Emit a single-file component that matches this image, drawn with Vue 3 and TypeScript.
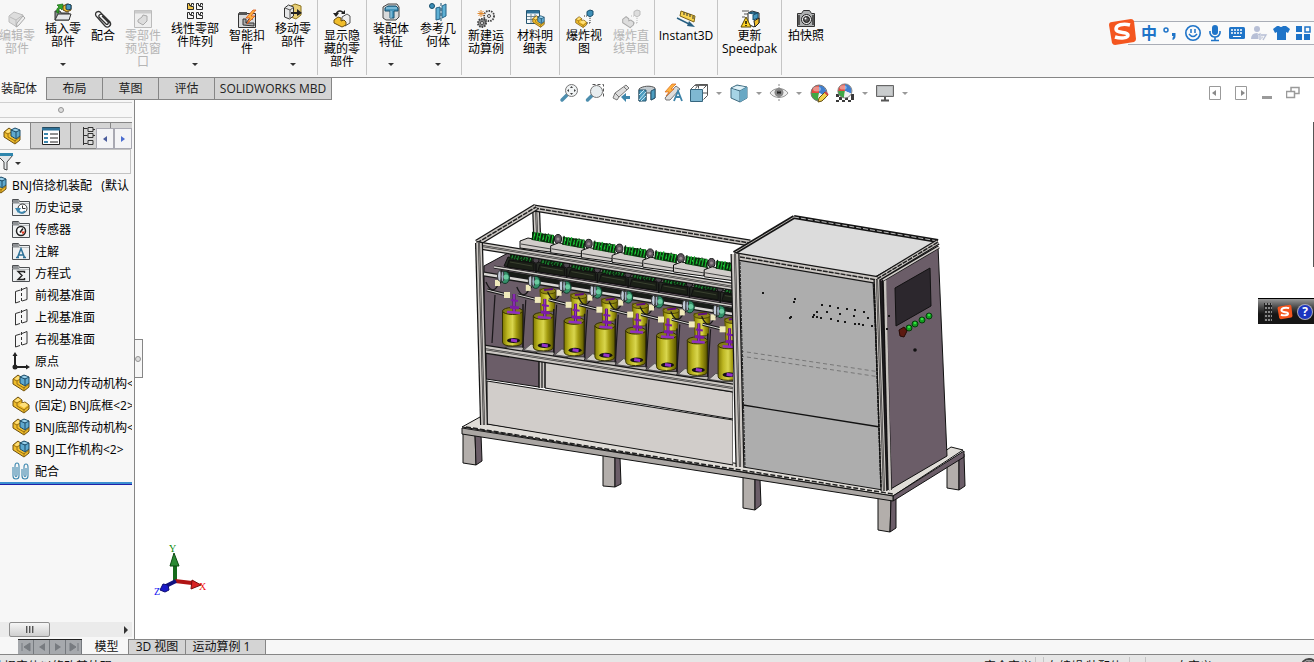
<script setup lang="ts">
interface Tool { label: string[]; icon: string; width: string; menu?: boolean; disabled?: boolean }

const part = '<path d="M1 5l5-4 4 3v3l3-1 4 3v4l-5 4L1 10z" fill="#f0bd2b" stroke="#6b4e10"/><path d="M1 5l4 2 5-3M5 7v3l7 4 5-4M12 13v4" fill="none" stroke="#9c7212"/><path d="M2.500 5L6 2l3 2-4 2zM7 9l3-2 3-.500 3 2.500-4 3z" fill="#ffe07a"/>'
const cube = '<path d="M8 3l4-2 5 2v6l-4 3-5-3z" fill="#5fa9cf" stroke="#1d4a66"/><path d="M8 3l5 2 4-2M13 5v6" fill="none" stroke="#1d4a66"/><path d="M9.500 3l2.500-1 4 1-3 1z" fill="#a9d8ee"/>'
const asm = part + cube
const folder = '<path d="M.5 4.500v-3h6l1 2h10v14H.5z" fill="#eef0f1" stroke="#4c4f52"/><path d="M1 2h5l1.500 3H1z" fill="#8f9295"/><path d="M1 5.500h16" stroke="#b9bcbe"/>'
const plane = '<path d="M3.500 5.500l5-1.500M10 3.500l5-2v12l-5 1.500M8 15.500l-4.500 1.500V5.500" fill="none" stroke="#333"/><path d="M9.500 2v14" stroke="#333" stroke-dasharray="3 2"/>'
const gear = (x: number, y: number, r: number, f: string) => `<circle cx="${x}" cy="${y}" r="${r}" fill="${f}" stroke="#444" stroke-width="2" stroke-dasharray="1.500 1"/><circle cx="${x}" cy="${y}" r="${r - 1}" fill="${f}"/><circle cx="${x}" cy="${y}" r="1.500" fill="#fff" stroke="#444"/>`
const ball = '<path d="M9 9V1a8 8 0 0 1 7 11z" fill="#3f7fd0"/><path d="M9 9V1a8 8 0 0 0-8 8z" fill="#e04a3f"/><path d="M9 9H1a8 8 0 0 0 7 8z" fill="#3fa845"/><path d="M9 9l-1 8a8 8 0 0 0 8-5z" fill="#f1f1f1"/><circle cx="9" cy="9" r="8" fill="none" stroke="#777"/><ellipse cx="7" cy="5" rx="4" ry="2.500" fill="#fff" opacity=".4"/>'
const quad = 'M.5.5h2v2h2v-2h2v2M.5.5v6h6v-3h-3'

const icons: Record<string, string> = {
  part, asm,
  edit: '<path d="M1 6l5-4 9 3v4l-6 8-8-5z" fill="#ddd" stroke="#bbb"/><path d="M2 7l6 3 7-5M8 10v5" fill="none" stroke="#bbb"/><path d="M8 17l1-4 6-7 2 2-6 7z" fill="#eee" stroke="#aaa"/>',
  insert: '<path d="M1 8h5l1 2h8v7H1z" fill="#8b8e90" stroke="#333"/><path d="M4 11h13l-2 6H1z" fill="#e6e7e8" stroke="#333"/><path d="M9 3l4-2 4 1v5l-4 2-4-2z" fill="#efbb2c" stroke="#5d4210"/><path d="M12 2l2-1 3 1v4l-3 1-2-1z" fill="#4796c2" stroke="#17405c"/><path d="M3 10c-1-3 0-5 2-6L3 2l6-1-1 6-2-2C5 6 4 8 5 10z" fill="#35a62b" stroke="#12660f" stroke-width=".7"/>',
  clip: '<path d="M16 13L7 3C5 0 0 2 2 6l9 10c3 3 7-1 5-4L9 5C7 3 4 5 5 7l7 7c1 1 3 0 2-2L8 6" fill="none" stroke="#333" stroke-width="1.300"/>',
  preview: '<path d="M.5.500h17v17H.5z" fill="#eee" stroke="#bbb"/><path d="M1 2h16" stroke="#ccc" stroke-width="3"/><path d="M4 10l4-3 1-2 4 1v5l-4 4-5-3z" fill="#ddd" stroke="#aaa"/>',
  pattern: ['#f3c84a|1|0', '#f4f4f4|10|0', '#f4f4f4|1|9', '#f4f4f4|10|9'].map((s) => { const [f, x, y] = s.split('|'); return `<g transform="translate(${x} ${y})"><path d="M.5.5h3v3h3v3h-6z" fill="${f}"/><path d="${quad}" fill="none" stroke="#2a2a2a"/></g>` }).join(''),
  smart: '<path d="M.5 3.500h17v14H.5z" fill="#d9dadb" stroke="#333"/><path d="M1 2h8v3H1z" fill="#555"/><path d="M5 15V9h3v4h8v3zM8 13l3-4h4" fill="#aaa" stroke="#333"/><path d="M15 0L8 8h4l-3 6 8-8h-4l5-6z" fill="#ffb33e" stroke="#d9541a" stroke-width=".8"/>',
  move: '<path d="M7 3l4-2 6 2v9l-5 4-5-2z" fill="#e9cf75" stroke="#8b731f"/><path d="M0.500 5l4-3 5 2v9l-4 3-5-2z" fill="#e6e7e8" stroke="#333"/><path d="M1 5l5 2 4-3M6 7v8" fill="none" stroke="#555"/><path d="M7 9h6V6l5 4-5 3v-2H7z" fill="#222"/>',
  show: '<path d="M9 7l5-3 3 2v7l-5 3-3-3z" fill="#eee" stroke="#555"/><path d="M1 10l4-3 3 1v3l3-1 2 2v3l-4 2-8-4z" fill="#f0bd2b" stroke="#6b4e10"/><path d="M3 5C4 0 9 0 10 3" fill="none" stroke="#222" stroke-width="1.600"/><path d="M0 3l3 4 3-4zM8 4l4 0V0z" fill="#222"/>',
  feature: '<path d="M1 4l5-3h9l2 3v10l-3 3H4l-3-2z" fill="#d8dadb" stroke="#444"/><path d="M3 5l3-2h8l2 2v3h-4v7H8V8H3z" fill="#4797bd" stroke="#174e6c"/><path d="M4 5h11M9 8v7" stroke="#a9d8ee"/>',
  ref: '<circle cx="3" cy="3" r="2.500" fill="#3e8fb8" stroke="#174e6c"/><path d="M7 5l4-1v12l-4 1zM13 3l4-2v12l-4 2z" fill="#5fb0d4" stroke="#246387"/><path d="M12 0v18" stroke="#174e6c" stroke-dasharray="3 2"/>',
  motion: gear(12, 6, 5, '#eee') + gear(5, 13, 4, '#888') + '<path d="M4 0v7M0.500 3.500h7M1.500 1l5 5M6.500 1l-5 5" stroke="#e08a32"/>',
  bom: '<path d="M.5.500h13v13H.5z" fill="#f3f7f9" stroke="#24546f"/><path d="M1 2h12" stroke="#2f7299" stroke-width="3"/><path d="M1 6.500h12M1 9.500h12M5 4v9M9 4v9" stroke="#6c8795"/><g transform="translate(6 5) scale(.72)">' + asm + '</g>',
  explode: '<g transform="translate(0 6) scale(.68)">' + part + '</g><path d="M12 1.500l3-1.500 3 1v4l-3 2-3-2z" fill="#3e8fb8" stroke="#174e6c"/><path d="M15 8v5M9 6h3M12 13h3" stroke="#333" stroke-dasharray="1 1"/>',
  explodeOff: '<g transform="translate(0 6) scale(.68)"><path d="M1 5l5-4 4 3v3l3-1 4 3v4l-5 4L1 10z" fill="#ddd" stroke="#aaa" stroke-width="1.500"/></g><path d="M12 1.500l3-1.500 3 1v4l-3 2-3-2z" fill="#ddd" stroke="#bbb"/><path d="M15 8v5M9 6h3M12 13h3" stroke="#bbb" stroke-dasharray="1 1"/>',
  instant: '<path d="M4 1l14 5-1 6L3 6z" fill="#f8d34e" stroke="#7c6415"/><path d="M7 2v3M10 3v3M13 4v3M16 6v3" stroke="#333"/><path d="M0 8l12 6" stroke="#265f82" stroke-width="1.500"/><path d="M12 11l6 6-8-1z" fill="#265f82"/>',
  speedpak: '<path d="M7 3l4-2 7 2v10l-5 4-6-3z" fill="#fff" stroke="#222"/><path d="M12 5l5-2v5l-5 2zM8 3l4-1 4 1-4 1z" fill="#4797bd" stroke="#174e6c"/><path d="M13 11l5-3v5l-4 4z" fill="#f0bd2b" stroke="#222"/><path d="M1 1h7M3 4h4M1 7h3" stroke="#555"/><path d="M5 7l5 10H0z" fill="#ffd426" stroke="#5d4a00"/><path d="M5 11v3M5 15v1" stroke="#000" stroke-width="1.400"/>',
  camera: '<path d="M.5 3.500h4l2-3h6l2 3h3v13H.5z" fill="#aeb0b1" stroke="#333"/><path d="M2 5v10M16 5v10" stroke="#555" stroke-width="2"/><circle cx="9.500" cy="9.500" r="5" fill="#eee" stroke="#222"/><circle cx="9.500" cy="9.500" r="3" fill="#555" stroke="#111"/><circle cx="8.500" cy="8.500" r="1" fill="#fff"/>',
  zoomFit: '<path d="M2 16l5-5" stroke="#4d8eae" stroke-width="3.500" stroke-linecap="round"/><circle cx="11.500" cy="6.500" r="6" fill="#f0f3f4" stroke="#777"/><path d="M11.500 2l1.500 2h-3zM11.500 11l1.500-2h-3zM7 6.500L9 5v3zM16 6.500L14 5v3z" fill="#444"/>',
  zoomArea: '<path d="M6.500.500h11v12" fill="none" stroke="#555" stroke-dasharray="3 2"/><path d="M1.500 16l5-5" stroke="#4d8eae" stroke-width="3.500" stroke-linecap="round"/><circle cx="10.500" cy="7.500" r="6" fill="#e8edef" stroke="#777"/>',
  prev: '<path d="M1 14l2-5 11-8 3 3-10 9-2 3z" fill="#ddd" stroke="#777"/><path d="M3 9l4 4M12 3l3 3" stroke="#777"/><path d="M9 13l5-4v3h4v3h-4v3z" fill="#3e86ab"/>',
  section: '<path d="M1 5c3-3 12-4 16-1v10l-4 2V9H8v7l-7 1z" fill="#c3cbd0" stroke="#555"/><path d="M1 6h7v11H1zM13 7l4-2v9l-4 2z" fill="#4d9dc0" stroke="#24546f"/><path d="M1 11l5-5M1 16l7-8M3 17l5-5" stroke="#c2e3f0"/>',
  annot: '<path d="M1 14L12 2l4 3L6 16H2z" fill="#ddd" stroke="#777"/><path d="M8 0L1 8h4l-3 4 8-7H7l5-5z" fill="#ffb33e" stroke="#d9651a" stroke-width=".7"/><path d="M10 17l4-10 4 10M11 13h5" fill="none" stroke="#3d83a8" stroke-width="1.800"/>',
  orient: '<path d="M5.500 4.500l3-4h9v11l-4 4M13.500 4.500l4-4M8.500 4.500v-4M13 9h5" fill="none" stroke="#555"/><path d="M.5 5.500h12v12H.5z" fill="#7fb8d2" stroke="#36667f"/><path d="M.5 5.500l5-5h4M4.500 1.500h12" fill="none" stroke="#666"/>',
  display: '<path d="M1 4l6-3 10 2v11l-7 4-9-4z" fill="#a6d3e5" stroke="#406b80"/><path d="M1 4l9 3 7-4M10 7v11" fill="none" stroke="#406b80"/><path d="M10 7l7-4v11l-7 4z" fill="#69a8c4"/><path d="M2 4l5-2 8 1-5 3z" fill="#e0f1f7"/>',
  eye: '<path d="M0 9c4-6 14-6 18 0-4 6-14 6-18 0z" fill="#eee" stroke="#999"/><circle cx="9" cy="8.500" r="4.500" fill="#888"/><circle cx="9" cy="8.500" r="2" fill="#222"/><path d="M9 0v18" stroke="#888" stroke-dasharray="2 1"/>',
  appearance: ball + '<path d="M8 18l1-4 6-6 3 3-6 6z" fill="#f2d34d" stroke="#665114"/><path d="M15 8l3 3" stroke="#c44" stroke-width="2"/>',
  scene: '<path d="M0 9h18v9H0z" fill="#fff"/><path d="M0 10h3v3H0zM3 13h3v3H3zM0 16h3v2H0zM6 16h3v2H6zM9 13h3v3H9zM15 10h3v3h-3zM12 16h3v2h-3zM15 13h3v3h-3z" fill="#3a3a3a"/><g transform="translate(1 -1) scale(.88)">' + ball + '</g>',
  monitor: '<path d="M.5 1.500h17v11H.5z" fill="#b8babc" stroke="#666"/><path d="M2 3h14v8H2z" fill="#c9cccd"/><path d="M9 13v3M5 16.500h8" stroke="#555" stroke-width="2"/>',
  history: folder + '<circle cx="10.500" cy="10.500" r="4.500" fill="#fff" stroke="#333"/><path d="M10.500 7.500v3h3" fill="none" stroke="#333"/><path d="M3 10l3 5 3-5z" fill="#3d87ae"/><path d="M6 12c1 3 5 4 7 1" fill="none" stroke="#3d87ae" stroke-width="2"/>',
  sensor: folder + '<circle cx="9" cy="11" r="4.500" fill="#fff" stroke="#222" stroke-width="1.500"/><path d="M8 12.500l3-4" stroke="#222" stroke-width="1.500"/><path d="M9 11.500h4l-2 3z" fill="#e33b22"/>',
  note: folder + '<path d="M5.500 15.500l3.500-9 3.500 9M7 13h4M4 15.500h3M11 15.500h3" fill="none" stroke="#2d7198" stroke-width="1.500"/>',
  equation: folder + '<path d="M12.500 9V7.500H6l4 4-4 4h6.500V14" fill="none" stroke="#222" stroke-width="1.400"/>',
  plane,
  origin: '<path d="M3 15V3M3 15h12" stroke="#222" stroke-width="2"/><path d="M3 0l2.500 4h-5zM18 15l-4-2.500v5z" fill="#222"/><circle cx="3" cy="15" r="2.500" fill="#222"/>',
  mates: '<path d="M1 5v9c0 4 6 4 6 0V4c0-4-4-4-4 0v9c0 2 2 2 2 0V5M10 7v7c0 4 6 4 6 0V5c0-4-4-4-4 0v8c0 2 2 2 2 0V6" fill="none" stroke="#3d87ae" stroke-width="1.100"/>',
  props: '<path d="M.5.500h17v17H.5z" fill="#fff" stroke="#222"/><path d="M0 2h18" stroke="#2f7299" stroke-width="3"/><path d="M2 6h4v2H2zM2 10h4v2H2zM2 14h4v2H2z" fill="#3d87ae"/><path d="M8 7h8M8 11h8M8 15h8" stroke="#222"/>',
  config: '<path d="M1.500 0v18M1.500 1.500h4M1.500 8.500h4M1.500 16.500h4M6 .5h5v4H6zM6 6.500h5v4H6zM6 13.500h5v4H6zM11 2.500h2M11 8.500h2" fill="#ddd" stroke="#333"/>',
}

const groups: Tool[][] = [
  [
    { label: ['编辑零', '部件'], icon: 'edit', width: 'w46', disabled: true },
    { label: ['插入零', '部件'], icon: 'insert', width: 'w46', menu: true },
    { label: ['配合'], icon: 'clip', width: 'w34' },
    { label: ['零部件', '预览窗', '口'], icon: 'preview', width: 'w46', disabled: true },
    { label: ['线性零部', '件阵列'], icon: 'pattern', width: 'w58', menu: true },
    { label: ['智能扣', '件'], icon: 'smart', width: 'w46' },
    { label: ['移动零', '部件'], icon: 'move', width: 'w46', menu: true },
  ],
  [{ label: ['显示隐', '藏的零', '部件'], icon: 'show', width: 'w48' }],
  [
    { label: ['装配体', '特征'], icon: 'feature', width: 'w48', menu: true },
    { label: ['参考几', '何体'], icon: 'ref', width: 'w46', menu: true },
  ],
  [{ label: ['新建运', '动算例'], icon: 'motion', width: 'w48' }],
  [{ label: ['材料明', '细表'], icon: 'bom', width: 'w48' }],
  [
    { label: ['爆炸视', '图'], icon: 'explode', width: 'w48' },
    { label: ['爆炸直', '线草图'], icon: 'explodeOff', width: 'w46', disabled: true },
  ],
  [{ label: ['Instant3D'], icon: 'instant', width: 'w62' }],
  [{ label: ['更新', 'Speedpak'], icon: 'speedpak', width: 'w63' }],
  [{ label: ['拍快照'], icon: 'camera', width: 'w48' }],
]

const docTabs = ['布局', '草图', '评估', 'SOLIDWORKS MBD']
const viewTools: { icon: string; menu?: boolean; name: string }[] = [
  { icon: 'zoomFit', name: '整屏显示全图' }, { icon: 'zoomArea', name: '局部放大' }, { icon: 'prev', name: '上一视图' },
  { icon: 'section', name: '剖面视图' }, { icon: 'annot', name: '动态注解视图' }, { icon: 'orient', name: '视图定向', menu: true },
  { icon: 'display', name: '显示样式', menu: true }, { icon: 'eye', name: '隐藏/显示项目', menu: true },
  { icon: 'appearance', name: '编辑外观' }, { icon: 'scene', name: '应用布景', menu: true }, { icon: 'monitor', name: '视图设定', menu: true },
]
const tree = [
  { icon: 'history', text: '历史记录' }, { icon: 'sensor', text: '传感器' }, { icon: 'note', text: '注解' },
  { icon: 'equation', text: '方程式' }, { icon: 'plane', text: '前视基准面' }, { icon: 'plane', text: '上视基准面' },
  { icon: 'plane', text: '右视基准面' }, { icon: 'origin', text: '原点' }, { icon: 'asm', text: 'BNJ动力传动机构<1>' },
  { icon: 'part', text: '(固定) BNJ底框<2>' }, { icon: 'asm', text: 'BNJ底部传动机构<1>' },
  { icon: 'asm', text: 'BNJ工作机构<2>' }, { icon: 'mates', text: '配合' },
]

/* ---- machine drawing ---- */
type P = [number, number]
const poly = (pts: P[], fill: string, stroke = '#111') => `<polygon points="${pts.map((p) => p.join(',')).join(' ')}" fill="${fill}" stroke="${stroke}" stroke-width="1"/>`
const line = (a: P, b: P, c: string, w = 1, dash = '') => `<path d="M${a}L${b}" stroke="${c}" stroke-width="${w}" fill="none"${dash ? ` stroke-dasharray="${dash}"` : ''}/>`
const beam = (a: P, b: P, w: number, face = '#cbc7c3') => line(a, b, '#161616', w) + line(a, b, face, w - 2.500) + line(a, b, '#222', 1.500, '5 1')
const twin = (a: P, b: P, w: number) => line(a, b, '#161616', w) + line(a, b, '#cbc7c3', w - 2.500) + line(a, b, '#2a2a2a', 2) + line(a, b, '#a9a5a1', .8)

function bobbin(x: number, y: number, dim: boolean): string {
  const h = dim ? 6 : 9
  let s = poly([[x, y + 1], [x + 22, y + 4], [x + 22, y + 4 + h], [x, y + h]], dim ? '#10150f' : '#0b3a10', 'none')
  for (let k = 0; k < 15; k++) {
    const px = x + k * 1.5
    const py = y + k * .25
    const j = (k * 7) % 5
    const lit = dim ? '#177a2c' : '#16b72e'
    s += line([px, py + h - j * .4], [px + 1.500, py + j * .6], k % 2 ? lit : '#0a2b0d', 1.200)
    if (k % 3 === 1) s += line([px + 1, py + 1 + j], [px + 1.500, py + 3 + j], dim ? '#2a9c43' : '#2be046', 1)
  }
  return s
}

function machine(): string {
  let s = ''
  const purple = '#6b5d68', light = '#d1cdca', front = '#b3aeab'
  const leg = (a: P, b: P, c: P, d: P, e: P, f: P) => poly([a, b, e, f], front) + poly([b, c, d, e], purple)
  s += leg([463, 432], [475, 434], [481, 434], [482, 461], [476, 465], [463, 463])
  s += leg([603, 454], [615, 456], [620, 457], [621, 484], [615, 487], [603, 486])
  s += leg([743, 476], [755, 478], [760, 479], [761, 505], [755, 510], [743, 508])
  s += leg([947, 462], [959, 455], [964, 454], [965, 486], [959, 490], [947, 488])
  s += leg([878, 498], [891, 500], [896, 497], [896, 528], [890, 532], [878, 530])
  s += poly([[462, 427], [480, 417], [488, 424], [740, 464], [892, 488], [951, 447], [963, 450], [893, 496]], '#e0ddd8')
  s += poly([[893, 496], [964, 451], [964, 457], [893, 501]], purple)
  s += poly([[462, 428], [893, 496], [893, 501], [462, 434]], '#aaa6a3')
  s += line([466, 427], [893, 494], '#222', 1.500, '5 2')

  s += twin([536, 207], [537, 233], 8)
  s += beam([534, 208], [750, 243], 7)
  s += beam([477, 243], [536, 207], 7)
  s += '<g clip-path="url(#bay)">'
  s += poly([[484, 266], [508, 253], [733, 292], [733, 388], [484, 349]], purple)
  s += poly([[487, 381], [733, 420], [733, 465], [487, 424]], light)
  s += poly([[545, 361], [733, 392], [733, 419], [545, 388]], light)
  s += poly([[486, 352], [539, 361], [539, 387], [486, 379]], purple)
  s += twin([542, 360], [542, 388], 7)
  s += poly([[508, 257], [733, 294], [733, 303], [504, 266]], '#262b24')
  for (let i = 0; i < 8; i++) {
    const x = 30.7 * i, y = 4.8 * i
    s += poly([[520 + x, 241 + y], [528 + x, 238 + y], [554 + x, 243 + y], [550 + x, 252 + y], [520 + x, 248 + y]], light)
    s += line([521 + x, 244 + y], [551 + x, 249 + y], '#444')
    s += bobbin(532 + x, 231 + y, false)
    s += `<ellipse cx="${558 + x}" cy="${239 + y}" rx="3.500" ry="4.500" fill="#625761" stroke="#181818"/><circle cx="${558 + x}" cy="${239 + y}" r="1.500" fill="#9b8d93"/>`
    s += bobbin(510 + x, 253 + y, true)
    s += poly([[509 + x, 260 + y], [534 + x, 263 + y], [534 + x, 271 + y], [507 + x, 267 + y]], '#1b2017')
    s += line([510 + x, 262 + y], [532 + x, 266 + y], '#39402f')
    s += `<circle cx="${536 + x}" cy="${260 + y}" r="3.200" fill="#4b454c" stroke="#111"/>` + line([536 + x, 264 + y], [536 + x, 275 + y], '#111', 1.500)
  }
  s += line([494, 267], [733, 306], '#1a1a1a', 3) + line([494, 267], [733, 306], '#d5d2ce', 1.500)
  s += line([500, 273], [733, 311], '#181c17', 6)
  for (let i = 0; i < 8; i++) {
    const x = 30.8 * i, y = 4.9 * i
    s += poly([[524 + x, 350 + y], [531 + x, 344 + y], [545 + x, 347 + y], [545 + x, 353 + y]], light, '#555')
    s += line([495 + x, 295 + y], [492 + x, 343 + y], '#1b181b', 1.200)
    s += line([523 + x, 304 + y], [523 + x, 349 + y], '#1b181b', 1.500)
    if (i < 7) {
      s += poly([[540 + x, 289 + y], [556 + x, 292 + y], [554 + x, 311 + y], [541 + x, 312 + y]], 'url(#can)', '#5b5600')
      s += `<ellipse cx="${548 + x}" cy="${291 + y}" rx="8" ry="3" fill="#8f8617" stroke="#4d4800"/>` + line([544 + x, 290 + y], [553 + x, 289 + y], '#62107f', 2)
    }
    s += poly([[507 + x, 347 + y], [524 + x, 347 + y], [522 + x, 352 + y], [503 + x, 349 + y]], '#bcb8b4', '#333')
    s += `<path d="M${502.500 + x} ${311 + y}v31q0 4 10 4t10-4v-31z" fill="url(#can)" stroke="#343100"/><ellipse cx="${512.500 + x}" cy="${311 + y}" rx="10" ry="3.500" fill="#827a16" stroke="#343100"/>`
    s += line([514 + x, 294 + y], [514 + x, 312 + y], '#4c0f68', 3) + line([514 + x, 294 + y], [514 + x, 312 + y], '#9b35c8', 1.500)
    s += line([511 + x, 300 + y], [518 + x, 301 + y], '#7b1ca4', 2) + line([510 + x, 307 + y], [519 + x, 308 + y], '#7b1ca4', 3) + line([507 + x, 312 + y], [520 + x, 313 + y], '#8f2fc0', 2.500)
    s += `<ellipse cx="${513.500 + x}" cy="${340.500 + y}" rx="6.500" ry="2.500" fill="#151015"/>` + line([511 + x, 340 + y], [517 + x, 341 + y], '#9332c9', 3)
  }
  s += line([484, 274], [733, 314], '#1a1a1a', 5) + line([484, 274], [733, 314], '#d9d7d4', 2.500)
  for (let i = 0; i < 8; i++) {
    const x = 30.8 * i, y = 4.9 * i
    s += line([487 + x, 290 + y], [507 + x, 295 + y], '#1a1a1a', 3) + line([487 + x, 290 + y], [507 + x, 295 + y], '#d9d7d4', 1)
    s += `<path d="M${486 + x} ${282 + y}q6 14 12 3l7-7" fill="none" stroke="#191919" stroke-width="1.300"/>`
    s += `<rect x="${495 + x}" y="${280 + y}" width="5" height="6" fill="#f0eabc"/><rect x="${504 + x}" y="${292 + y}" width="6" height="6" fill="#f0eabc"/>`
    s += `<ellipse cx="${505 + x}" cy="${277.500 + y}" rx="4.500" ry="6" fill="#35906a" stroke="#123b2a"/><ellipse cx="${499.500 + x}" cy="${276 + y}" rx="2" ry="5" fill="#c2cbd8" stroke="#333"/><ellipse cx="${502.500 + x}" cy="${276.500 + y}" rx="1.500" ry="5" fill="#9cabc0" stroke="#333"/><circle cx="${506 + x}" cy="${277 + y}" r="2.500" fill="#6bcba0"/>`
  }
  s += twin([484, 349], [733, 388], 9)
  s += '</g>'
  s += twin([476, 245], [734, 287], 8)
  s += twin([479, 243], [484, 425], 8)
  s += poly([[738, 258], [873, 281], [883, 490], [743, 467]], '#adadad')
  s += line([740, 351], [880, 372], '#777', 1, '4 3') + line([740, 356], [880, 377], '#777', 1, '4 3') + line([743, 405], [880, 427], '#111', 1.300)
  s += poly([[734, 253], [794, 217], [938, 241], [875, 277]], '#dcdcdc')
  s += line([734, 253], [794, 217], '#151515', 4) + line([734, 253], [794, 217], '#aaa7a3', 1)
  s += line([794, 217], [938, 241], '#151515', 4) + line([794, 217], [938, 241], '#bbb', 1, '5 2')
  s += poly([[880, 280], [938, 246], [947, 456], [889, 490]], purple)
  s += beam([877, 279], [938, 242], 6)
  s += beam([734, 256], [877, 280], 8)
  s += twin([735, 254], [740, 467], 9)
  s += line([740, 262], [745, 467], '#222', 1, '3 1')
  s += line([881, 281], [888, 490], '#211d22', 5)
  s += twin([877, 280], [884, 491], 7)
  s += line([884, 280], [890, 490], '#111', 4) + line([885, 280], [890, 490], '#c8c4c0', 2.500)
  s += line([874, 284], [881, 488], '#111', 1.500, '3 1')
  s += line([883, 280], [939, 247], '#111', 3) + line([883, 280], [939, 247], '#d0ccc8', 1.500)
  s += poly([[895, 288], [930, 268], [931, 306], [896, 326]], '#2c272d')
  const greens: P[] = [[929, 316], [922, 320], [915, 324], [909, 328]]
  for (const [x, y] of greens) s += `<circle cx="${x}" cy="${y}" r="3" fill="#139c20" stroke="#063b0b"/><circle cx="${x}" cy="${y - 1}" r="1.300" fill="#34e13f"/>`
  s += '<path d="M899 330l5-3 3 4-3 6-4-1z" fill="#5c1910" stroke="#260905"/><circle cx="915" cy="350" r="1.800" fill="#111"/>'
  const dots: P[] = [[763, 293], [795, 299], [794, 302], [791, 317], [790, 318], [822, 305], [830, 306], [838, 308], [847, 309], [855, 310], [864, 312], [827, 312], [840, 314], [854, 316], [868, 318], [817, 312], [814, 315], [817, 317], [813, 317], [821, 318], [831, 319], [838, 321], [845, 322], [855, 324], [859, 324], [863, 325], [872, 326], [889, 316], [887, 329]]
  for (const [x, y] of dots) s += `<rect x="${x - 1}" y="${y - 1}" width="2" height="2" fill="#161616"/>`
  return s
}
const machineMarkup = '<defs><clipPath id="bay"><path d="M480 215h253v255H480z"/></clipPath><linearGradient id="can"><stop offset="0" stop-color="#817a00"/><stop offset=".25" stop-color="#bdb723"/><stop offset=".5" stop-color="#d9d64d"/><stop offset=".7" stop-color="#a39c10"/><stop offset="1" stop-color="#5b5600"/></linearGradient></defs>' + machine()
const sogou = '<path d="M4 4L23 1q2 0 3 2l2 18q0 2-2 3L7 27q-2 0-3-2L1 7q0-3 3-3z" fill="#f4561f"/><path d="M22 7C15 5 8 7 8 11c0 5 12 2 12 6 0 3-7 4-13 2" fill="none" stroke="#fff" stroke-width="3.500"/>'
const ime = [
  { name: '标点', art: '<circle cx="4" cy="6" r="2" fill="none" stroke="#1f74c8" stroke-width="1.500"/><path d="M10 9h3.500v3q0 3-3 4v-2l1-2H10z" fill="#1f74c8"/>' },
  { name: '表情', art: '<circle cx="9" cy="9" r="7.200" fill="none" stroke="#1f74c8" stroke-width="1.600"/><path d="M7 5v4M11 5v4M5 10q4 5 8 0" fill="none" stroke="#1f74c8" stroke-width="1.500"/>' },
  { name: '语音', art: '<rect x="6" y="1" width="6" height="10" rx="3" fill="#1f74c8"/><path d="M4 7v2q1 4 5 4t5-4V7M9 13v3M5 16.500h8" fill="none" stroke="#1f74c8" stroke-width="1.600"/>' },
  { name: '键盘', art: '<rect x="1" y="3" width="16" height="12" rx="1.500" fill="#1f74c8"/><path d="M3 6h12M3 9h12" stroke="#fff" stroke-width="1.500" stroke-dasharray="2 1"/><path d="M5 12.500h8" stroke="#fff"/>' },
  { name: '用户', art: '<circle cx="7" cy="5" r="3" fill="#b7bfd6"/><path d="M1 15q0-6 6-6t6 6z" fill="#b7bfd6"/><path d="M8 11l2-1v6M11 11h5l-3 5" fill="none" stroke="#f7f7f7" stroke-width="3"/><path d="M8 11l2-1v6M11 11h5l-3 5" fill="none" stroke="#b7bfd6" stroke-width="1.300"/>' },
  { name: '皮肤', art: '<path d="M5 2h2q2 2 4 0h3l4 3-2 4-2-1v8H5V8L3 9 1 5z" fill="#1f74c8"/>' },
  { name: '工具箱', art: '<path d="M2 2h6v6H2zM2 10h6v6H2zM10 10h6v6h-6z" fill="#1f74c8"/><path d="M11 3h5v5h-5z" fill="none" stroke="#1f74c8" stroke-width="1.500"/>' },
]
</script>

<template>
  <div class="app">
    <header class="ribbon">
      <div v-for="(g, gi) in groups" :key="gi" class="group">
        <button v-for="t in g" :key="t.label.join('')" type="button" class="tool" :class="[t.width, { menu: t.menu }]" :disabled="t.disabled">
          <svg class="icon" viewBox="0 0 18 18" aria-hidden="true" v-html="icons[t.icon]" />
          <span v-for="l in t.label" :key="l" class="label">{{ l }}</span>
          <i v-if="t.menu" class="caret" />
        </button>
      </div>
      <div class="ime">
        <svg class="ime-logo" viewBox="0 0 29 28" aria-hidden="true" v-html="sogou" />
        <button type="button" class="ime-mode">中</button>
        <button v-for="b in ime" :key="b.name" type="button" class="ime-btn" :aria-label="b.name">
          <svg class="icon" viewBox="0 0 18 18" aria-hidden="true" v-html="b.art" />
        </button>
      </div>
    </header>

    <div class="tabrow">
      <nav class="tabs" aria-label="命令管理器">
        <button type="button" class="tab active">装配体</button>
        <button v-for="t in docTabs" :key="t" type="button" class="tab">{{ t }}</button>
      </nav>
      <div class="viewbar">
        <template v-for="v in viewTools" :key="v.icon">
          <button type="button" class="vbtn" :aria-label="v.name"><svg class="icon" viewBox="0 0 18 18" aria-hidden="true" v-html="icons[v.icon]" /></button>
          <button v-if="v.menu" type="button" class="vmenu" :aria-label="v.name + '菜单'"><i class="caret grey" /></button>
        </template>
      </div>
      <div class="winbtns">
        <button type="button" aria-label="左侧面板"><svg viewBox="0 0 14 14"><path d="M1.500.5h11v13h-11z" fill="none" stroke="#9a9a9a" /><path d="M8 4v6L4 7z" fill="#8a8a8a" /></svg></button>
        <button type="button" aria-label="右侧面板"><svg viewBox="0 0 14 14"><path d="M1.500.5h11v13h-11z" fill="none" stroke="#9a9a9a" /><path d="M7 4v6l4-3z" fill="#8a8a8a" /></svg></button>
        <button type="button" aria-label="最小化"><svg viewBox="0 0 14 14"><path d="M2 10h10v3H2z" fill="#9a9a9a" /></svg></button>
        <button type="button" aria-label="还原"><svg viewBox="0 0 14 14"><path d="M.5 5.500h8v6h-8zM5 5.500v-4h8v6H9" fill="none" stroke="#9a9a9a" stroke-width="1.500" /></svg></button>
      </div>
    </div>

    <main class="work">
      <aside class="panel">
        <div class="grip"><i class="knob" /></div>
        <div class="ptabs">
          <button type="button" class="ptab on" aria-label="设计树"><svg class="icon" viewBox="0 0 18 18" v-html="icons.asm" /></button>
          <button type="button" class="ptab" aria-label="属性"><svg class="icon" viewBox="0 0 18 18" v-html="icons.props" /></button>
          <button type="button" class="ptab" aria-label="配置"><svg class="icon" viewBox="0 0 18 18" v-html="icons.config" /></button>
          <div class="pscroll">
            <button type="button" aria-label="向左"><svg viewBox="0 0 8 8"><path d="M6 1v6L2 4z" fill="#4a5c9c" /></svg></button>
            <button type="button" aria-label="向右"><svg viewBox="0 0 8 8"><path d="M2 1v6l4-3z" fill="#4a6cd0" /></svg></button>
          </div>
        </div>
        <div class="filter">
          <svg class="icon" viewBox="0 0 18 18" aria-hidden="true"><path d="M1 2h16l-6 7v8l-3-1V9z" fill="#e3e6e8" stroke="#444" /><path d="M1 1.500h16" stroke="#2f86ad" stroke-width="3" /></svg>
          <i class="caret" />
          <input type="text" aria-label="过滤设计树">
        </div>
        <ul class="tree">
          <li class="root"><svg class="icon" viewBox="0 0 18 18" v-html="icons.asm" /><span>BNJ倍捻机装配&nbsp;&nbsp; (默认</span></li>
          <li v-for="n in tree" :key="n.text"><svg class="icon" viewBox="0 0 18 18" v-html="icons[n.icon]" /><span>{{ n.text }}</span></li>
        </ul>
        <div class="rollback" />
        <div class="hscroll"><span class="thumb"><i /><i /><i /></span><svg viewBox="0 0 8 8"><path d="M2 0v8l4-4z" fill="#333" /></svg></div>
      </aside>

      <section class="viewport" aria-label="图形区域">
        <div class="splitter"><i class="knob" /></div>
        <svg class="model" viewBox="455 195 520 345" role="img" aria-label="倍捻机" v-html="machineMarkup" />
        <svg class="triad" viewBox="150 540 60 60" aria-hidden="true">
          <path d="M175 581V564" stroke="#156b1c" stroke-width="4" /><path d="M174 553l5 13h-9z" fill="#2b8a33" stroke="#0d4a12" />
          <path d="M175 581l17 2" stroke="#b01414" stroke-width="4" /><path d="M201 585l-10 4 1-9z" fill="#d92323" stroke="#7a0c0c" />
          <path d="M176 581l-10 5" stroke="#121280" stroke-width="4" /><path d="M160 590l3-6 5 1 1 5-4 2z" fill="#1a1ac8" stroke="#0c0c70" />
          <text x="169" y="552" fill="#0a8a0a">Y</text><text x="199" y="590" fill="#f01010">X</text><text x="154" y="595" fill="#1010f0">Z</text>
        </svg>
        <div class="taskedge" />
        <div class="mini">
          <span class="dots" />
          <svg viewBox="0 0 29 28" aria-hidden="true" v-html="sogou" />
          <button type="button" aria-label="帮助">?</button>
        </div>
      </section>
    </main>

    <nav class="sheets" aria-label="视图标签">
      <div class="navs">
        <button type="button" aria-label="第一个"><svg viewBox="0 0 12 12"><path d="M2 2v8M10 2v8L4 6z" fill="#777b80" stroke="#777b80" /></svg></button>
        <button type="button" aria-label="上一个"><svg viewBox="0 0 12 12"><path d="M9 2v8L3 6z" fill="#777b80" /></svg></button>
        <button type="button" aria-label="下一个"><svg viewBox="0 0 12 12"><path d="M3 2v8l6-4z" fill="#777b80" /></svg></button>
        <button type="button" aria-label="最后一个"><svg viewBox="0 0 12 12"><path d="M10 2v8M2 2v8l6-4z" fill="#777b80" stroke="#777b80" /></svg></button>
      </div>
      <button type="button" class="sheet current">模型</button>
      <button type="button" class="sheet">3D 视图</button>
      <button type="button" class="sheet wide">运动算例 1</button>
      <div class="fill" />
    </nav>
    <footer class="status">
      <span class="hint">选择实体以修改其外观</span>
      <span class="cell first">完全定义</span><span class="cell gap" /><span class="cell editing">在编辑 装配体</span><span class="cell slim" /><span class="cell custom">自定义</span>
      <svg viewBox="0 0 18 18" aria-hidden="true"><circle cx="9" cy="9" r="8" fill="#ddd" stroke="#444" stroke-width="2" /><path d="M4 5q5-4 10 0" fill="none" stroke="#444" /></svg>
    </footer>
  </div>
</template>

<style>
body { overflow: hidden; }
</style>

<style scoped>
.app { display: flex; flex-direction: column; height: calc(100vh + 14px); background: #fff; color: #111; font: 12px/14px "Open Sans", "Noto Sans CJK SC", sans-serif; }
.app *, .app *::before { box-sizing: border-box; }
button { margin: 0; padding: 0; border: 0; background: none; font: inherit; color: inherit; }
svg { display: block; flex: none; }
.icon { width: 18px; height: 18px; overflow: visible; }
.caret { width: 0; height: 0; border: 3px solid transparent; border-top-color: #333; border-bottom: 0; }
.caret.grey { border-top-color: #999; }

.ribbon { position: relative; flex: none; display: flex; height: 78px; background: #f7f7f7; border-bottom: 1px solid #868686; overflow: hidden; }
.group { display: flex; flex: none; height: 75px; border-right: 1px solid #c5c5c5; }
.group:nth-child(9) { border-right: 0; }
.group:first-child { margin-left: -6px; padding-right: 1px; }
.tool { position: relative; display: flex; flex-direction: column; align-items: center; padding-top: 10px; line-height: 13px; white-space: nowrap; color: #000; }
.tool .icon { margin-bottom: 1px; }
.tool.menu { padding-top: 3px; }
.tool:disabled { color: #b5b5b5; }
.label { display: block; height: 13px; }
.tool .caret { margin-top: 15px; }
.w34 { width: 34px; } .w46 { width: 46px; } .w48 { width: 48px; } .w58 { width: 58px; } .w62 { width: 62px; } .w63 { width: 63px; }

.ime { position: absolute; right: 0; top: 21px; display: flex; align-items: center; height: 24px; padding-left: 30px; border: solid #a9adb6; border-width: 1px 0; background: #fafafa; }
.ime-logo { position: absolute; left: 0; top: -4px; width: 29px; height: 28px; }
.ime::before { content: ""; position: absolute; left: 0; top: -1px; width: 20px; height: 24px; background: #f7f7f7; }
.ime-mode { width: 22px; font-size: 16px; font-weight: 700; color: #1f74c8; }
.ime-btn { display: flex; justify-content: center; width: 22px; }

.tabrow { flex: none; display: flex; height: 22px; position: relative; z-index: 1; }
.tabs { display: flex; height: 22px; color: #222; }
.tab { width: 56px; border: solid #868686; border-width: 0 1px 1px 0; background: #d4d4d4; line-height: 20px; white-space: nowrap; }
.tab:last-child { width: 117px; }
.tab.active { width: 47px; margin-top: -1px; padding: 1px 0 0 1px; text-align: left; background: #f7f7f7; border-bottom: 0; }
.viewbar { display: flex; align-items: center; height: 30px; margin-left: 224px; }
.vbtn { display: flex; justify-content: center; width: 26px; }
.vmenu { display: flex; justify-content: center; width: 14px; }
.winbtns { display: flex; gap: 12px; margin: 8px 14px 0 auto; height: 14px; }
.winbtns svg { width: 14px; height: 14px; }

.work { flex: 1; display: flex; min-height: 0; }
.panel { flex: none; display: flex; flex-direction: column; width: 135px; padding-right: 2px; background: #f7f7f7; border-right: 1px solid #868686; overflow: hidden; }
.grip { flex: none; display: flex; justify-content: center; align-items: center; height: 16px; margin: 2px 0 4px; padding-right: 10px; border: solid #cfcfcf; border-width: 1px 0; }
.knob { width: 6px; height: 6px; border: 1px solid #949494; border-radius: 3px; background: #ddd; }
.ptabs { flex: none; position: relative; display: flex; height: 27px; background: #d4d4d4; border-top: 1px solid #868686; }
.ptab { display: flex; align-items: center; justify-content: center; width: 40px; border: solid #868686; border-width: 0 1px 1px 0; }
.ptab.on { width: 31px; padding-right: 6px; background: #f7f7f7; border-bottom: 0; }
.pscroll { position: absolute; right: 0; bottom: 0; display: flex; }
.pscroll button { display: flex; align-items: center; justify-content: center; width: 18px; height: 21px; border: 1px solid #a9a9b2; background: #f4f4f6; }
.pscroll svg { width: 8px; height: 8px; }
.filter { flex: none; display: flex; align-items: center; height: 25px; margin-right: 1px; border: solid #c3c3c3; border-width: 1px 1px 1px 0; }
.filter .icon { margin-left: -4px; }
.filter .caret { margin: 4px 0 0 1px; }
.filter input { flex: 1; min-width: 0; height: 20px; border: 0; background: none; outline: 0; }
.tree { flex: none; margin: 0; padding: 0; list-style: none; overflow: hidden; color: #000; }
.tree li { display: flex; align-items: center; gap: 5px; height: 22px; padding-left: 12px; white-space: nowrap; }
.tree span { padding-top: 2px; }
.tree .root { margin-left: -23px; }
.rollback { flex: none; height: 3px; border-top: 2px solid #3c8fd0; background: #2020a8; }
.hscroll { flex: none; display: flex; align-items: center; justify-content: space-between; height: 15px; margin: auto 0 2px; padding: 0 2px 0 9px; background: #ebebeb; }
.thumb { display: flex; align-items: center; justify-content: center; gap: 2px; width: 41px; height: 15px; border: 1px solid #8e8e8e; border-radius: 2px; background: linear-gradient(#f6f6f6, #cfcfcf); }
.thumb i { width: 1px; height: 7px; background: #555; box-shadow: 1px 0 #aaa; }
.hscroll svg { width: 8px; height: 8px; }

.viewport { position: relative; flex: 1; overflow: hidden; background: #fff; }
.splitter { position: absolute; left: -1px; top: 239px; display: flex; align-items: center; justify-content: center; width: 9px; height: 39px; border: 1px solid #868686; border-left: 0; background: #f7f7f7; }
.model { position: absolute; left: 320px; top: 95px; width: 520px; height: 345px; }
.triad { position: absolute; left: 15px; bottom: 39px; width: 60px; height: 60px; font: 10px "Liberation Serif", serif; }
.taskedge { position: absolute; right: 0; top: 22px; width: 1px; height: 145px; background: #555; }
.mini { position: absolute; right: 0; top: 198px; display: flex; align-items: center; gap: 5px; width: 56px; height: 26px; padding-left: 6px; border-top: 1px solid #000; background: linear-gradient(#999, #444 35%, #161616 60%); overflow: hidden; }
.dots { flex: none; width: 8px; height: 18px; background: repeating-linear-gradient(#0000 0 2px, #222 2px 4px), repeating-linear-gradient(90deg, #222 0 1px, #888 1px 3px); }
.mini svg { width: 16px; height: 16px; }
.mini button { flex: none; width: 14px; height: 14px; border-radius: 7px; background: #1c36c0; box-shadow: 0 0 0 1px #aab; color: #fff; font-weight: 700; line-height: 14px; }

.sheets { flex: none; display: flex; height: 16px; border-bottom: 1px solid #868686; background: #f7f7f7; line-height: 14px; }
.navs { display: flex; margin-left: 18px; border-top: 1px solid #222; background: #999da2; }
.navs button { display: flex; align-items: center; justify-content: center; width: 16px; border-right: 1px solid #75797e; background: #a6a9ad; }
.navs svg { width: 12px; height: 12px; }
.sheet { width: 57px; border: solid #868686; border-width: 1px 1px 0 0; background: #d4d4d4; white-space: nowrap; line-height: 12px; }
.sheet.current { width: 47px; padding-left: 3px; border-top: 0; background: #f7f7f7; }
.sheet.wide { width: 80px; padding-right: 8px; }
.fill { flex: 1; border-top: 1px solid #868686; }
.status { flex: none; display: flex; height: 21px; background: #e6e6e6; line-height: 20px; white-space: nowrap; }
.hint { margin: 2px auto 0 -8px; }
.cell { margin-top: 2px; border-right: 1px solid #c5c5c5; }
.first { width: 52px; }
.gap { width: 8px; }
.editing { width: 86px; padding-left: 3px; }
.slim { width: 16px; }
.custom { width: 154px; padding-left: 30px; border: 0; }
.status svg { width: 18px; height: 18px; margin: 3px -4px 0 0; }
</style>
